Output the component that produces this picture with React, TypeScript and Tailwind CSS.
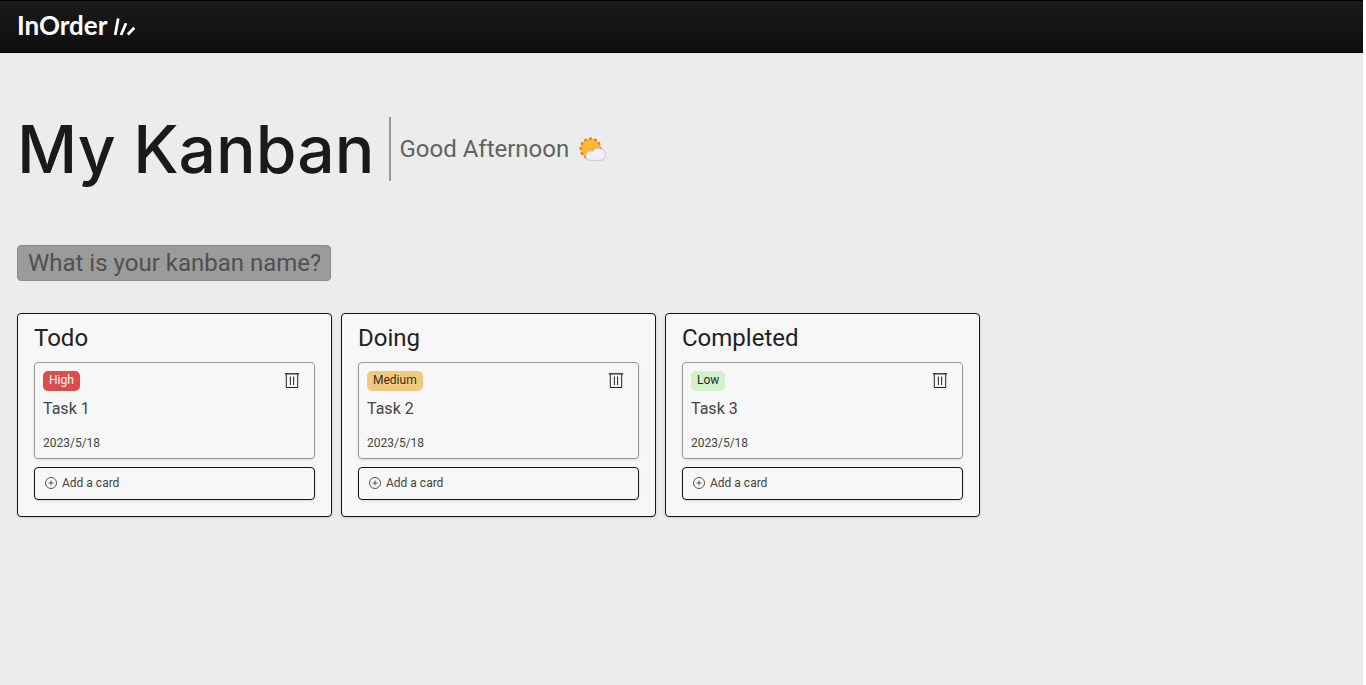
import React from "react";

type Task = { column: string; priority: string; tone: string; title: string; date: string };

const tasks: Task[] = [
  { column: "Todo", priority: "High", tone: "bg-[#dc4c4c] text-white", title: "Task 1", date: "2023/5/18" },
  { column: "Doing", priority: "Medium", tone: "bg-[#f0c980] text-[#3a2d14]", title: "Task 2", date: "2023/5/18" },
  { column: "Completed", priority: "Low", tone: "bg-[#d2f1cc] text-[#1f2a1d]", title: "Task 3", date: "2023/5/18" },
];

function LogoMark() {
  return (
    <svg className="h-6 w-6" viewBox="0 0 24 24" fill="none" stroke="currentColor" strokeWidth="2.8" aria-hidden="true">
      <path d="M6.2 4.5 3.2 21M14 9.200 9 21M22.300 13.800 15.800 20.500" />
    </svg>
  );
}

function TrashIcon() {
  return (
    <svg className="h-4 w-4" viewBox="0 0 16 16" fill="none" stroke="currentColor" aria-hidden="true">
      <path d="M.8 .8h14.4" strokeWidth="1.3" />
      <path d="M2.3 1v13.500h11.400V1M6.400 3.500v8.500M9.600 3.500v8.500" />
    </svg>
  );
}

function PlusIcon() {
  return (
    <svg className="h-3 w-3" viewBox="0 0 12 12" fill="none" stroke="currentColor" strokeWidth="0.9" aria-hidden="true">
      <circle cx="6" cy="6" r="5.5" />
      <path d="M6 3.5v5M3.5 6h5" />
    </svg>
  );
}

const rays = [0, 30, 60, 90, 120, 150, 180, 210, 240, 270, 300, 330];

function SunCloud() {
  return (
    <svg className="h-6 w-7" viewBox="0 0 28 24" role="img" aria-label="Sun behind cloud">
      {rays.map((angle) => (
        <circle key={angle} cx="11.5" cy="2.2" r="1.9" fill="#f7762b" transform={`rotate(${angle} 11.5 11.5)`} />
      ))}
      <circle cx="11.5" cy="11.5" r="9" fill="#fbb833" />
      <path d="M11.5 23.3a4.6 4.6 0 0 1-.3-9.2c1.200-.1 1.900.1 2.500.3a6 6 0 0 1 7.800-2.700 5.900 5.900 0 0 1 .2 11.600z" fill="#f4eefb" stroke="#cbc0d2" />
    </svg>
  );
}

function Column({ task }: { task: Task }) {
  return (
    <section className="w-[315px] rounded border border-[#151515] bg-[#f7f7f7] px-4 pt-2 pb-4 shadow-sm">
      <h2 className="text-2xl text-[#222]">{task.column}</h2>
      <article className="mt-2 rounded border border-[#999] px-2 pt-2 pb-[7px] shadow-sm">
        <div className="flex items-center justify-between">
          <span className={`rounded-[5px] px-1.5 pt-px pb-[3px] text-xs ${task.tone}`}>{task.priority}</span>
          <button type="button" aria-label={`Delete ${task.title}`} className="mr-1.5 text-[#222]">
            <TrashIcon />
          </button>
        </div>
        <h3 className="mt-1.5 text-base text-[#444]">{task.title}</h3>
        <p className="mt-3.5 text-xs text-[#444]">{task.date}</p>
      </article>
      <button type="button" className="mt-2 flex w-full items-center gap-[5px] rounded border border-[#151515] px-2.5 pt-[7px] pb-2 text-xs text-[#444] shadow-sm">
        <PlusIcon />
        Add a card
      </button>
    </section>
  );
}

export default function App() {
  return (
    <div className="mr-[3px] min-h-screen bg-[#ececec] font-[Roboto,sans-serif]">
      <header className="flex h-[53px] items-center gap-[5px] border-y border-black bg-linear-to-b from-[#1a1a1a] to-[#0e0e0e] px-[17px] pb-0.5 font-[Lato,sans-serif] text-[26px] font-bold text-white">
        <span>InOrder</span>
        <LogoMark />
      </header>
      <main className="px-[17px] pt-16">
        <div className="flex items-center">
          <h1 className="border-r-2 border-[#999] pr-[15px] font-[Inter,sans-serif] text-[66px] leading-[64px] font-medium text-[#1a1a1a]">
            My Kanban
          </h1>
          <p className="ml-2 flex items-center gap-2.5 text-2xl text-[#5f6361]">
            Good Afternoon
            <SunCloud />
          </p>
        </div>
        <input
          type="text"
          aria-label="Kanban name"
          placeholder="What is your kanban name?"
          className="mt-16 block h-9 w-[314px] rounded border border-[#8a8a8a] bg-[#9b9b9b] px-2.5 text-2xl text-[#222] placeholder:text-[#505050]"
        />
        <div className="mt-8 flex flex-wrap gap-[9px]">
          {tasks.map((task) => (
            <Column key={task.column} task={task} />
          ))}
        </div>
      </main>
    </div>
  );
}
